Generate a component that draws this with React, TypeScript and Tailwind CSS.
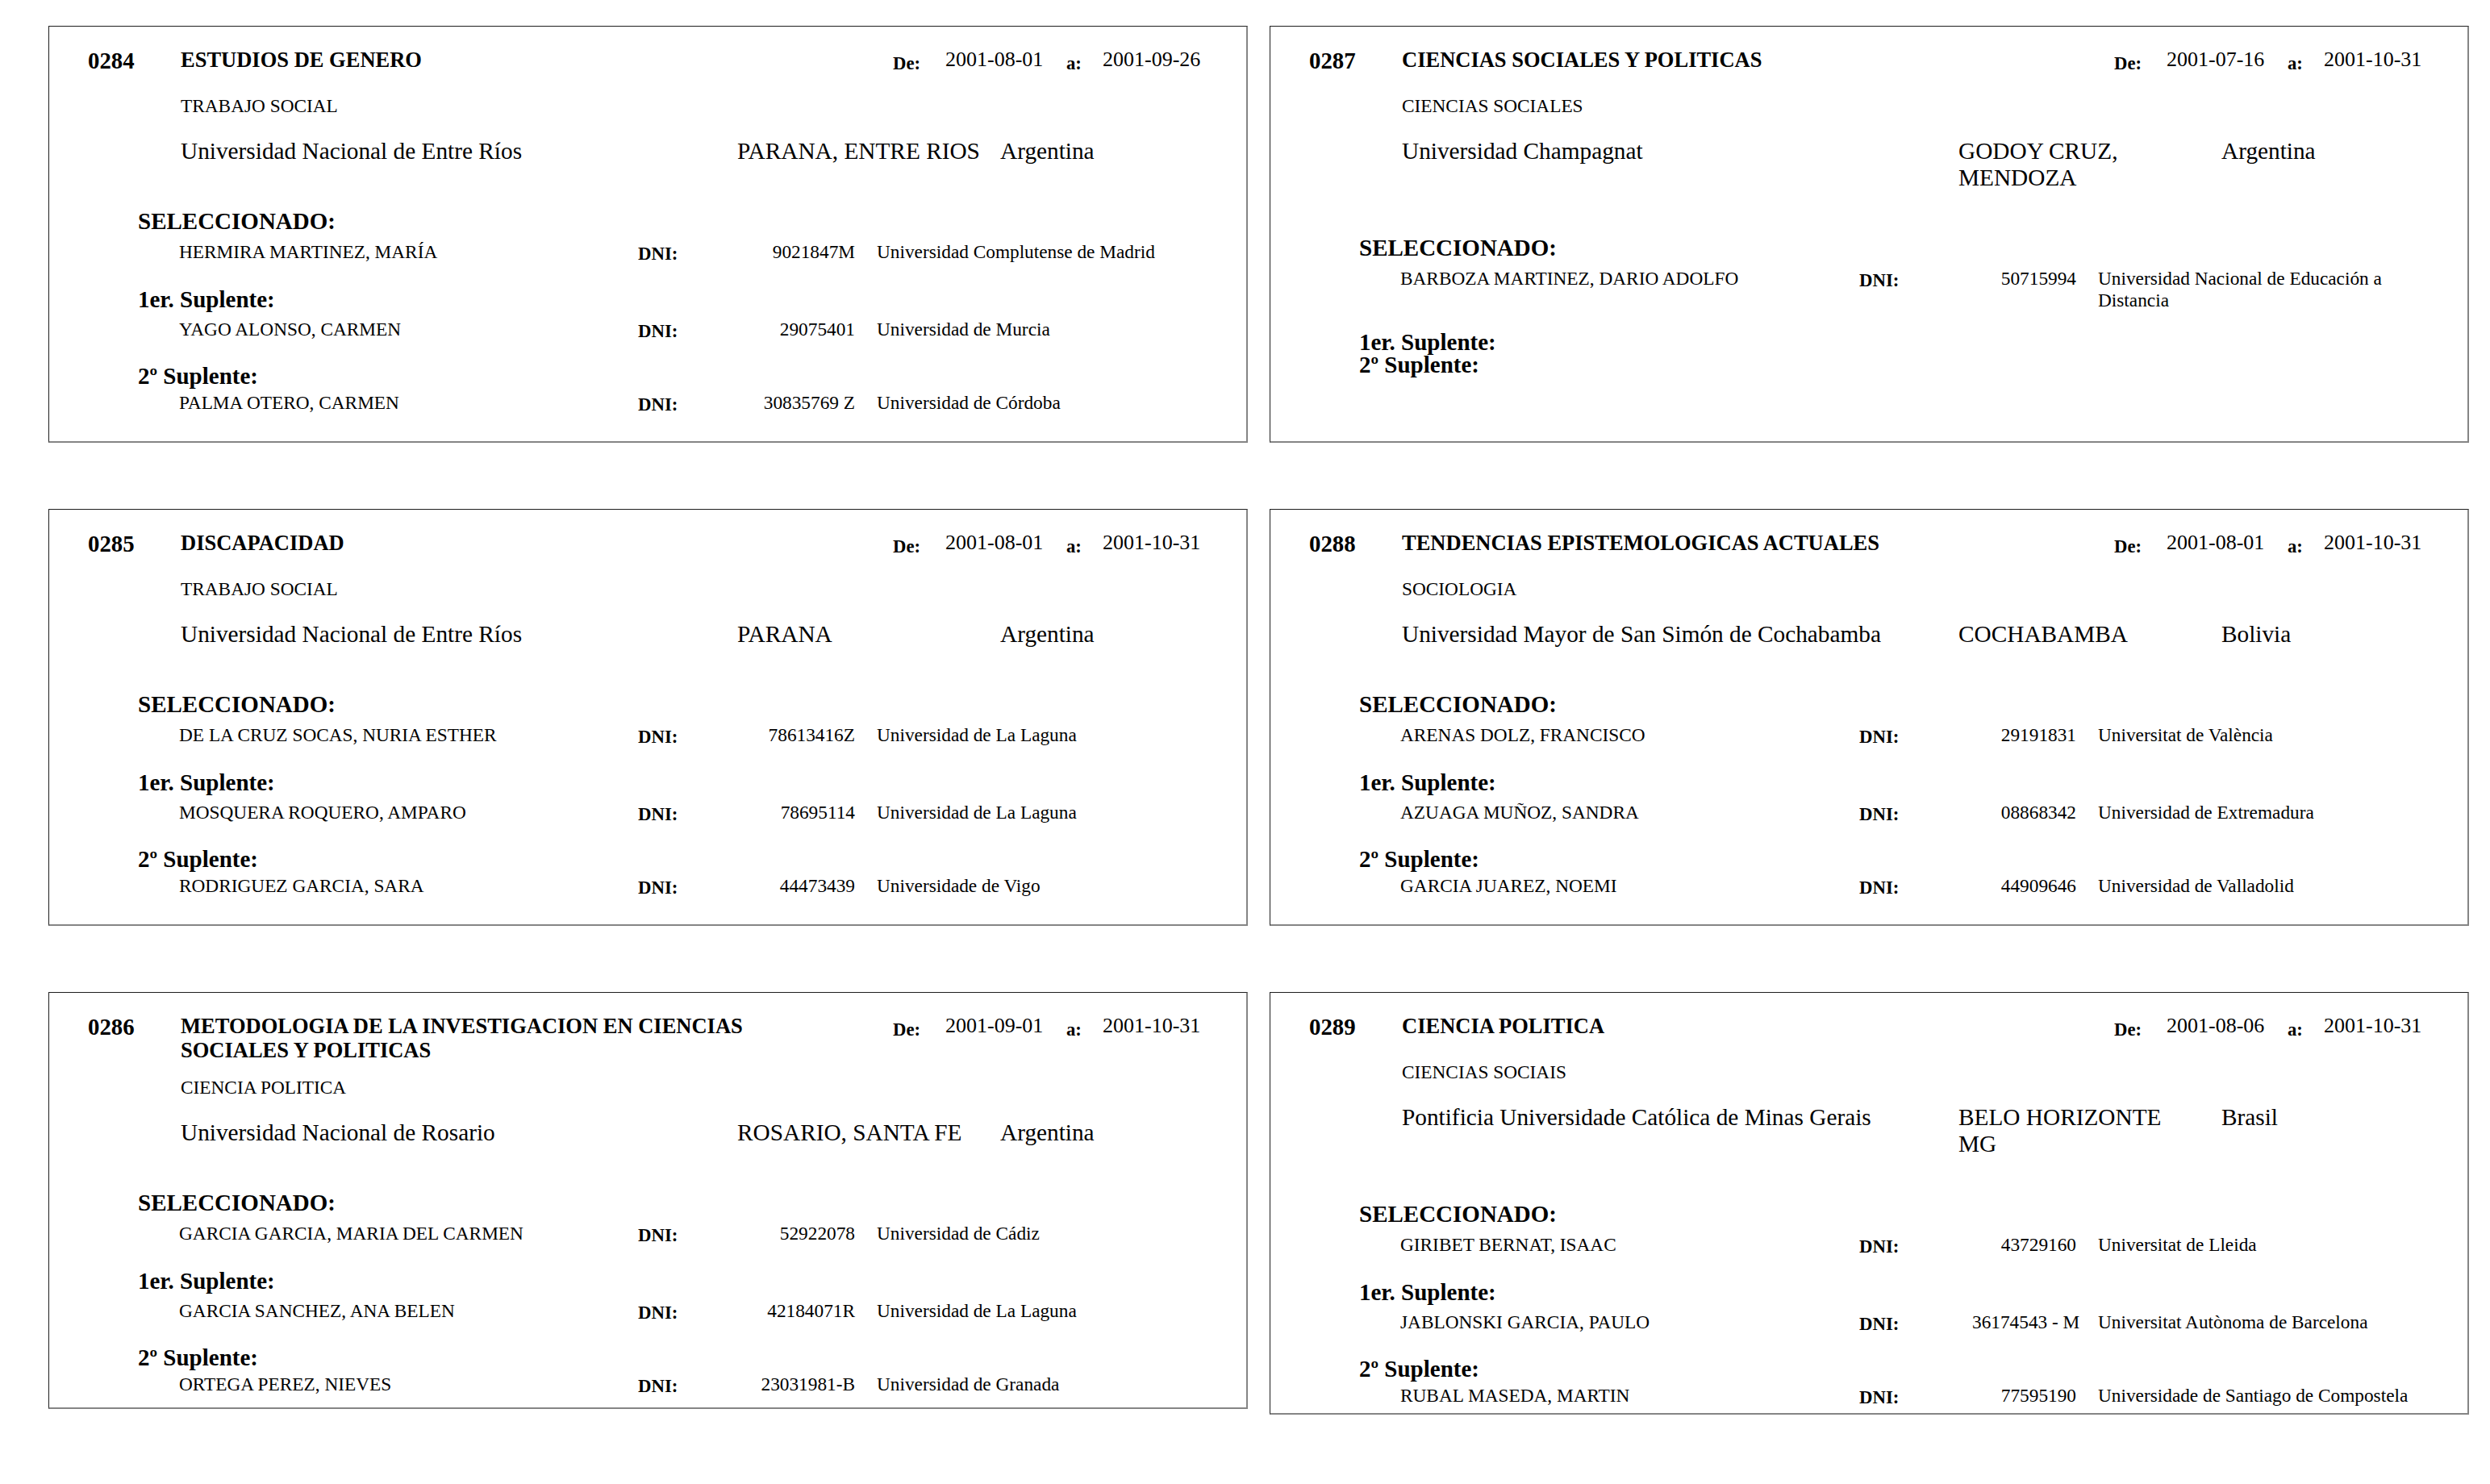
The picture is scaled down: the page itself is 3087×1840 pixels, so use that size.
import React from "react";

type Person = { name: string; dni: string; uni: string[] };
type Card = {
  code: string;
  title: string[];
  from: string;
  to: string;
  area: string;
  univ: string;
  city: string[];
  country: string;
  sel?: Person;
  s1?: Person;
  s2?: Person;
};

const cards: Card[] = [
  {
    code: "0284",
    title: ["ESTUDIOS DE GENERO"],
    from: "2001-08-01",
    to: "2001-09-26",
    area: "TRABAJO SOCIAL",
    univ: "Universidad Nacional de Entre Ríos",
    city: ["PARANA, ENTRE RIOS"],
    country: "Argentina",
    sel: { name: "HERMIRA MARTINEZ, MARÍA", dni: "9021847M", uni: ["Universidad Complutense de Madrid"] },
    s1: { name: "YAGO ALONSO, CARMEN", dni: "29075401", uni: ["Universidad de Murcia"] },
    s2: { name: "PALMA OTERO, CARMEN", dni: "30835769 Z", uni: ["Universidad de Córdoba"] },
  },
  {
    code: "0287",
    title: ["CIENCIAS SOCIALES Y POLITICAS"],
    from: "2001-07-16",
    to: "2001-10-31",
    area: "CIENCIAS SOCIALES",
    univ: "Universidad Champagnat",
    city: ["GODOY CRUZ,", "MENDOZA"],
    country: "Argentina",
    sel: {
      name: "BARBOZA MARTINEZ, DARIO ADOLFO",
      dni: "50715994",
      uni: ["Universidad Nacional de Educación a", "Distancia"],
    },
  },
  {
    code: "0285",
    title: ["DISCAPACIDAD"],
    from: "2001-08-01",
    to: "2001-10-31",
    area: "TRABAJO SOCIAL",
    univ: "Universidad Nacional de Entre Ríos",
    city: ["PARANA"],
    country: "Argentina",
    sel: { name: "DE LA CRUZ SOCAS, NURIA ESTHER", dni: "78613416Z", uni: ["Universidad de La Laguna"] },
    s1: { name: "MOSQUERA ROQUERO, AMPARO", dni: "78695114", uni: ["Universidad de La Laguna"] },
    s2: { name: "RODRIGUEZ GARCIA, SARA", dni: "44473439", uni: ["Universidade de Vigo"] },
  },
  {
    code: "0288",
    title: ["TENDENCIAS EPISTEMOLOGICAS ACTUALES"],
    from: "2001-08-01",
    to: "2001-10-31",
    area: "SOCIOLOGIA",
    univ: "Universidad Mayor de San Simón de Cochabamba",
    city: ["COCHABAMBA"],
    country: "Bolivia",
    sel: { name: "ARENAS DOLZ, FRANCISCO", dni: "29191831", uni: ["Universitat de València"] },
    s1: { name: "AZUAGA MUÑOZ, SANDRA", dni: "08868342", uni: ["Universidad de Extremadura"] },
    s2: { name: "GARCIA JUAREZ, NOEMI", dni: "44909646", uni: ["Universidad de Valladolid"] },
  },
  {
    code: "0286",
    title: ["METODOLOGIA DE LA INVESTIGACION EN CIENCIAS", "SOCIALES Y POLITICAS"],
    from: "2001-09-01",
    to: "2001-10-31",
    area: "CIENCIA POLITICA",
    univ: "Universidad Nacional de Rosario",
    city: ["ROSARIO, SANTA FE"],
    country: "Argentina",
    sel: { name: "GARCIA GARCIA, MARIA DEL CARMEN", dni: "52922078", uni: ["Universidad de Cádiz"] },
    s1: { name: "GARCIA SANCHEZ, ANA BELEN", dni: "42184071R", uni: ["Universidad de La Laguna"] },
    s2: { name: "ORTEGA PEREZ, NIEVES", dni: "23031981-B", uni: ["Universidad de Granada"] },
  },
  {
    code: "0289",
    title: ["CIENCIA POLITICA"],
    from: "2001-08-06",
    to: "2001-10-31",
    area: "CIENCIAS SOCIAIS",
    univ: "Pontificia Universidade Católica de Minas Gerais",
    city: ["BELO HORIZONTE", "MG"],
    country: "Brasil",
    sel: { name: "GIRIBET BERNAT, ISAAC", dni: "43729160", uni: ["Universitat de Lleida"] },
    s1: { name: "JABLONSKI GARCIA, PAULO", dni: "36174543 - M", uni: ["Universitat Autònoma de Barcelona"] },
    s2: { name: "RUBAL MASEDA, MARTIN", dni: "77595190", uni: ["Universidade de Santiago de Compostela"] },
  },
];

function Label({ text, mt }: { text: string; mt: string }) {
  return (
    <div className={`${mt} ml-[62px] text-[29px] leading-[28px] font-bold whitespace-nowrap`}>{text}</div>
  );
}

function PersonRow({ p, mt }: { p: Person; mt: string }) {
  return (
    <div className={`${mt} ml-[113px] flex items-start min-h-[34px] text-[23.3px] leading-[27px]`}>
      <div className="w-[569px] whitespace-nowrap">{p.name}</div>
      <div className="w-[140px] mt-[3px] text-[22.8px] leading-[26px] font-bold">DNI:</div>
      <div className="w-[129px] text-right whitespace-nowrap">{p.dni}</div>
      <div className="ml-[27px] w-[410px]">
        {p.uni.map((u, i) => (
          <div key={i} className="whitespace-nowrap">
            {u}
          </div>
        ))}
      </div>
    </div>
  );
}

function CardView({ c }: { c: Card }) {
  return (
    <div className="min-h-[517px] border-t border-l border-t-[#1e1e1e] border-l-[#1e1e1e] border-r-2 border-b-2 border-r-[#858585] border-b-[#858585] pl-[48px] pt-[26px] pb-[1px] text-black">
      <div className="flex items-start min-h-[41px]">
        <div className="w-[115px] text-[28.8px] leading-[33px] font-bold">{c.code}</div>
        <div className="w-[883px] text-[26.5px] leading-[30px] font-bold">
          {c.title.map((t, i) => (
            <div key={i} className="whitespace-nowrap">
              {t}
            </div>
          ))}
        </div>
        <div className="w-[65px] mt-[7px] text-[22.7px] leading-[26px] font-bold">De:</div>
        <div className="w-[150px] text-[26px] leading-[30px] whitespace-nowrap">{c.from}</div>
        <div className="w-[45px] mt-[7px] text-[22.7px] leading-[26px] font-bold">a:</div>
        <div className="text-[26px] leading-[30px] whitespace-nowrap">{c.to}</div>
      </div>
      <div className="mt-[18px] pl-[115px] text-[23.3px] leading-[27px] whitespace-nowrap">{c.area}</div>
      <div className="mt-[26px] pl-[115px] flex items-start text-[29.3px] leading-[33px]">
        <div className="w-[690px] whitespace-nowrap">{c.univ}</div>
        <div className="w-[326px]">
          {c.city.map((t, i) => (
            <div key={i} className="whitespace-nowrap">
              {t}
            </div>
          ))}
        </div>
        <div className="whitespace-nowrap">{c.country}</div>
      </div>
      <Label text="SELECCIONADO:" mt="mt-[56px]" />
      {c.sel && <PersonRow p={c.sel} mt="mt-[11px]" />}
      <Label text="1er. Suplente:" mt={c.sel ? "mt-[24px]" : "mt-[0px]"} />
      {c.s1 && <PersonRow p={c.s1} mt="mt-[10px]" />}
      <Label text="2º Suplente:" mt={c.s1 ? "mt-[23px]" : "mt-[0px]"} />
      {c.s2 && <PersonRow p={c.s2} mt="mt-[6px]" />}
    </div>
  );
}

export default function App() {
  return (
    <div className="min-h-[1840px] w-[3087px] bg-white font-['Liberation_Serif','Times_New_Roman',serif]">
      <div className="pl-[60px] pt-[32px] grid grid-cols-[1487px_1487px] gap-x-[27px] gap-y-[82px] items-start">
        {cards.map((c) => (
          <CardView key={c.code} c={c} />
        ))}
      </div>
    </div>
  );
}
